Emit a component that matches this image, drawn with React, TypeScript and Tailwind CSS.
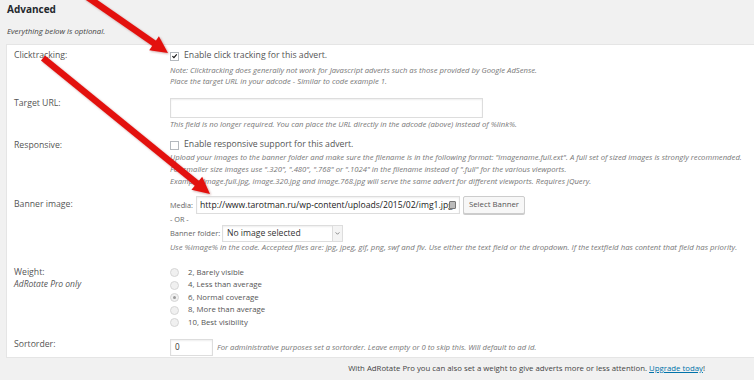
import React from 'react';

const font = { fontFamily: '"Open Sans", "Liberation Sans", sans-serif' };

function Arrow({ x1, y1, x2, y2 }: { x1: number; y1: number; x2: number; y2: number }) {
  const dx = x2 - x1;
  const dy = y2 - y1;
  const len = Math.hypot(dx, dy);
  const ux = dx / len;
  const uy = dy / len;
  const head = 17;
  const half = 8.5;
  const bx = x2 - ux * head;
  const by = y2 - uy * head;
  const pts = `${x2},${y2} ${bx - uy * half},${by + ux * half} ${bx + uy * half},${by - ux * half}`;
  return (
    <g>
      <line x1={x1} y1={y1} x2={bx + ux * 2} y2={by + uy * 2} stroke="#e3110e" strokeWidth={6.5} />
      <polygon points={pts} fill="#e3110e" />
    </g>
  );
}

function Radio({ label, checked }: { label: string; checked?: boolean }) {
  return (
    <div className="flex h-[12.5px] items-center">
      <span className="flex h-[9px] w-[9px] items-center justify-center rounded-full border border-[#d6d6d6] bg-[#f0f0f0]">
        {checked && <span className="h-[3px] w-[3px] rounded-full bg-[#9a9a9a]" />}
      </span>
      <span className="ml-[9px] text-[7.8px] text-[#555]">{label}</span>
    </div>
  );
}

function Label({ children, pt }: { children: React.ReactNode; pt: string }) {
  return <div className={`w-[163px] shrink-0 pl-[7px] text-[8.7px] leading-[12px] text-[#555] ${pt}`}>{children}</div>;
}

export default function App() {
  return (
    <div className="relative h-[380px] w-[754px] overflow-hidden bg-[#f1f1f1]" style={font}>
      <h2 className="pl-[7px] pt-[3px] text-[10px] font-bold leading-[12px] text-[#23282d]">Advanced</h2>
      <p className="mt-[11px] pl-[7px] text-[7.8px] italic leading-[10px] text-[#444]">Everything below is optional.</p>

      <div className="ml-[6px] mt-[8px] w-[760px] border border-[#e5e5e5] bg-white">
        {/* clicktracking */}
        <div className="flex h-[45px]">
          <Label pt="pt-[4px]">Clicktracking:</Label>
          <div className="pt-[5px]">
            <div className="flex h-[12px] items-center">
              <span className="flex h-[9px] w-[9px] items-center justify-center border border-[#b4b9be] bg-white">
                <svg viewBox="0 0 10 10" className="h-[8px] w-[8px]">
                  <path d="M2 5.2 L4.2 7.4 L8.2 2.6" fill="none" stroke="#111" strokeWidth={1.6} />
                </svg>
              </span>
              <span className="ml-[5px] text-[8.7px] text-[#555]">Enable click tracking for this advert.</span>
            </div>
            <div className="mt-[3px] text-[7.7px] italic leading-[11px] text-[#777]">
              <div>Note: Clicktracking does generally not work for Javascript adverts such as those provided by Google AdSense.</div>
              <div>Place the target URL in your adcode - Similar to code example 1.</div>
            </div>
          </div>
        </div>

        {/* target url */}
        <div className="flex h-[42px]">
          <Label pt="pt-[7px]">Target URL:</Label>
          <div className="pt-[8px]">
            <div className="h-[20px] w-[313px] border border-[#ddd] bg-white shadow-[inset_0_1px_2px_rgba(0,0,0,0.07)]" />
            <div className="mt-[1px] text-[7.7px] italic leading-[11px] text-[#777]">
              This field is no longer required. You can place the URL directly in the adcode (above) instead of %link%.
            </div>
          </div>
        </div>

        {/* responsive */}
        <div className="flex h-[56px]">
          <Label pt="pt-[7px]">Responsive:</Label>
          <div className="pt-[7px]">
            <div className="flex h-[12px] items-center">
              <span className="h-[9px] w-[9px] border border-[#b4b9be] bg-white" />
              <span className="ml-[5px] text-[8.7px] text-[#555]">Enable responsive support for this advert.</span>
            </div>
            <div className="whitespace-nowrap text-[7.7px] italic leading-[12px] text-[#777]">
              <div>Upload your images to the banner folder and make sure the filename is in the following format: "imagename.full.ext". A full set of sized images is strongly recommended.</div>
              <div>For smaller size images use ".320", ".480", ".768" or ".1024" in the filename instead of ".full" for the various viewports.</div>
              <div>Example: image.full.jpg, image.320.jpg and image.768.jpg will serve the same advert for different viewports. Requires jQuery.</div>
            </div>
          </div>
        </div>

        {/* banner image */}
        <div className="flex h-[68px]">
          <Label pt="pt-[10px]">Banner image:</Label>
          <div className="pt-[8px]">
            <div className="flex h-[18px] items-center">
              <span className="w-[26px] text-[7.3px] text-[#666]">Media:</span>
              <div className="relative flex h-[18px] w-[264px] items-center overflow-hidden border border-[#ddd] bg-white pl-[3px] shadow-[inset_0_1px_2px_rgba(0,0,0,0.07)]">
                <span className="whitespace-nowrap text-[8.6px] text-[#222]">http://www.tarotman.ru/wp-content/uploads/2015/02/img1.jpg</span>
                <span className="absolute right-[3px] top-[4px] h-[8px] w-[7px] rounded-[1px] border border-[#777] bg-[#bbb]" />
              </div>
              <button className="ml-[3px] h-[18px] w-[62px] rounded-[2px] border border-[#ccc] bg-[#f7f7f7] text-[7.8px] text-[#555] shadow-[0_1px_0_#ccc]">
                Select Banner
              </button>
            </div>
            <div className="text-[7.3px] leading-[11px] text-[#666]">- OR -</div>
            <div className="flex h-[17px] items-center">
              <span className="w-[52px] text-[7.5px] text-[#666]">Banner folder:</span>
              <div className="flex h-[17px] w-[121px] items-center border border-[#ddd] bg-white shadow-[inset_0_1px_2px_rgba(0,0,0,0.07)]">
                <span className="flex-1 pl-[4px] text-[8.6px] text-[#333]">No image selected</span>
                <span className="flex h-full w-[10px] items-center justify-center border-l border-[#ddd] bg-[#f4f4f4]">
                  <svg viewBox="0 0 6 4" className="h-[3px] w-[5px]">
                    <path d="M0.5 0.5 L3 3 L5.5 0.5" fill="none" stroke="#666" strokeWidth={1} />
                  </svg>
                </span>
              </div>
            </div>
            <div className="whitespace-nowrap text-[7.8px] italic leading-[11px] text-[#777]">
              Use %image% in the code. Accepted files are: jpg, jpeg, gif, png, swf and flv. Use either the text field or the dropdown. If the textfield has content that field has priority.
            </div>
          </div>
        </div>

        {/* weight */}
        <div className="flex h-[77px]">
          <div className="w-[163px] shrink-0 pl-[7px] pt-[10px] text-[#555]">
            <div className="text-[8.7px] leading-[12px]">Weight:</div>
            <div className="text-[8.5px] italic leading-[11px]">AdRotate Pro only</div>
          </div>
          <div className="pt-[10.5px]">
            <Radio label="2, Barely visible" />
            <Radio label="4, Less than average" />
            <Radio label="6, Normal coverage" checked />
            <Radio label="8, More than average" />
            <Radio label="10, Best visibility" />
          </div>
        </div>

        {/* sortorder */}
        <div className="flex h-[24px]">
          <Label pt="pt-[5px]">Sortorder:</Label>
          <div className="flex items-start pt-[6px]">
            <div className="flex h-[17px] w-[43px] items-center border border-[#ddd] bg-white pl-[4px] text-[8.2px] text-[#333] shadow-[inset_0_1px_2px_rgba(0,0,0,0.07)]">0</div>
            <span className="ml-[4px] text-[7.7px] italic leading-[17px] text-[#777]">
              For administrative purposes set a sortorder. Leave empty or 0 to skip this. Will default to ad id.
            </span>
          </div>
        </div>
      </div>

      <div className="pr-[49px] pt-[4px] text-right text-[7.8px] leading-[12px] text-[#444]">
        With AdRotate Pro you can also set a weight to give adverts more or less attention.{' '}
        <a className="text-[#0073aa] underline">Upgrade today</a>!
      </div>

      <svg className="pointer-events-none absolute inset-0" width={754} height={380} viewBox="0 0 754 380">
        <g style={{ filter: 'drop-shadow(1px 1px 1px rgba(120,0,0,0.35))' }}>
          <Arrow x1={86} y1={-4} x2={168} y2={53} />
          <Arrow x1={43} y1={58} x2={210} y2={194} />
        </g>
      </svg>
    </div>
  );
}
